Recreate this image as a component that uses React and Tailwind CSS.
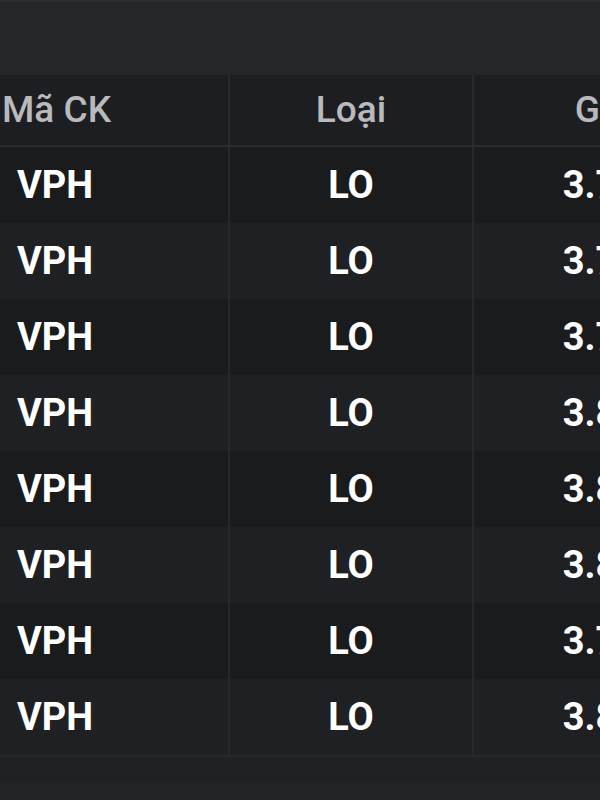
import React from "react";

const rows = ["3.75", "3.72", "3.74", "3.80", "3.85", "3.82", "3.78", "3.81"];

export default function App() {
  return (
    <div
      className="w-[600px] h-[800px] overflow-hidden bg-[#202124] flex flex-col"
      style={{ fontFamily: 'Roboto, "Liberation Sans", Arial, sans-serif' }}
    >
      <div className="h-[75px] shrink-0 bg-[#25262a] border-t-2 border-[#2b2c30]" />
      <div className="w-[740px] shrink-0">
        <div className="flex h-[72px] bg-[#1d1e21] border-b-2 border-[#2a2b2e] text-[37px] font-medium text-[#b9babd]">
          <div className="w-[230px] border-r-2 border-[#2a2b2e] flex items-center pl-[2px]">Mã CK</div>
          <div className="w-[244px] border-r-2 border-[#2a2b2e] flex items-center justify-center">Loại</div>
          <div className="w-[256px] flex items-center justify-center">Giá</div>
        </div>
        {rows.map((p, i) => (
          <div
            key={i}
            className={
              "flex h-[76px] text-[38px] font-bold text-white " +
              (i % 2 === 0 ? "bg-[#1a1b1d]" : "bg-[#1f2023]")
            }
          >
            <div className="w-[230px] border-r-2 border-[#27282b] flex items-center pl-[17px]">VPH</div>
            <div className="w-[244px] border-r-2 border-[#27282b] flex items-center justify-center">LO</div>
            <div className="w-[254px] flex items-center justify-center">{p}</div>
          </div>
        ))}
      </div>
      <div className="h-[2px] shrink-0 bg-[#27282b]" />
      <div className="h-[26px] shrink-0 bg-[#202124]" />
      <div className="flex-1 bg-[#232427]" />
    </div>
  );
}
